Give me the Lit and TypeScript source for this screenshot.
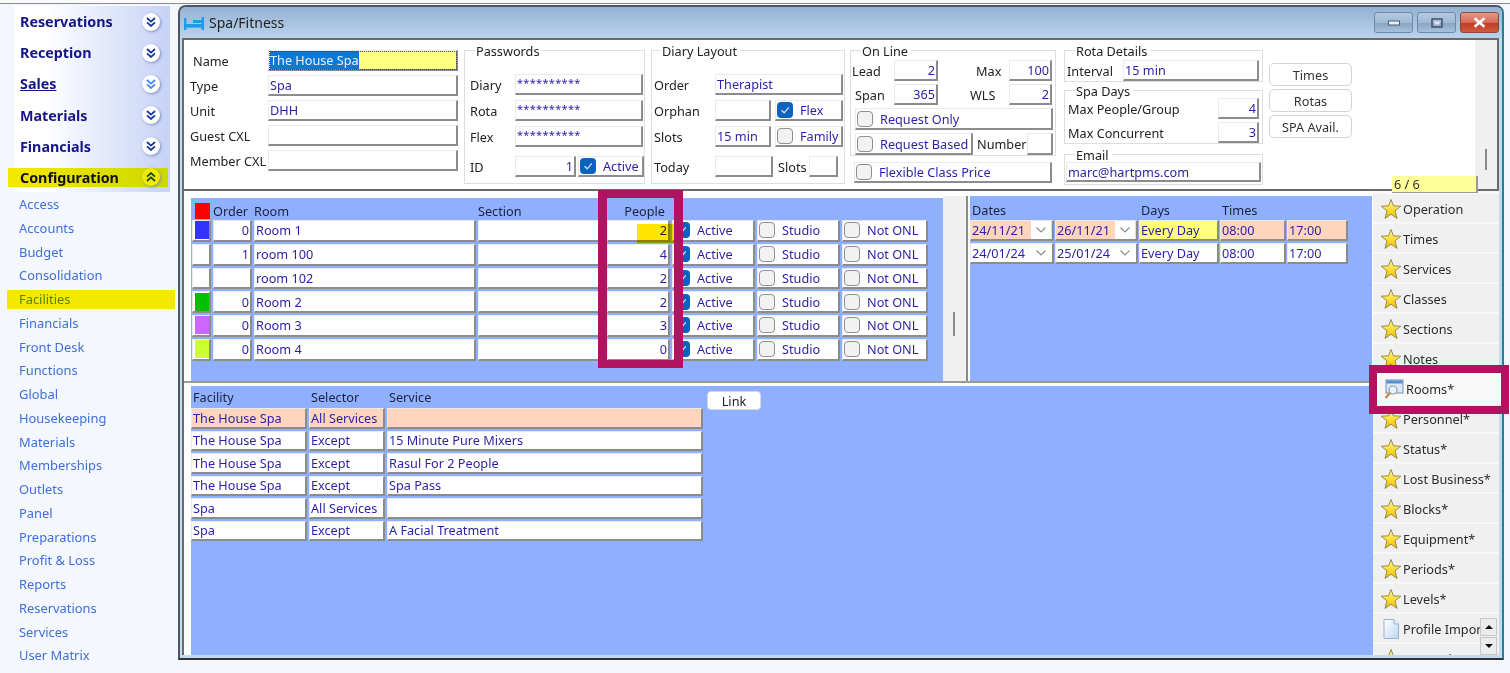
import { LitElement, html, css, svg } from "lit";
import { customElement } from "lit/decorators.js";

const star = html`<svg class="star" viewBox="0 0 22 22" width="22" height="22"><defs><linearGradient id="sg" x1="0" y1="0" x2="0" y2="1"><stop offset="0" stop-color="#fff7a0"/><stop offset="0.6" stop-color="#fbd928"/><stop offset="1" stop-color="#eeb410"/></linearGradient></defs><path d="M11 1.5 L13.4 7.8 L20.8 8.2 L15 12.8 L17 20.4 L11 16.2 L5 20.4 L7 12.8 L1.2 8.2 L8.6 7.8 Z" fill="url(#sg)" stroke="#8f8240" stroke-width="0.9"/></svg>`;
const roomsIcon = html`<svg class="star" viewBox="0 0 22 22" width="22" height="22"><rect x="3" y="2" width="17" height="13" fill="#dbe8f6" stroke="#6d8fb5"/><rect x="3.5" y="2.5" width="16" height="3" fill="#5a8fd0"/><circle cx="10" cy="12" r="4" fill="#e9f3f8" stroke="#8aa0a8" stroke-width="1.2"/><path d="M7 15 L2.5 20" stroke="#c08a50" stroke-width="2.2"/></svg>`;
const docIcon = html`<svg class="star" viewBox="0 0 22 22" width="22" height="22"><defs><linearGradient id="dg" x1="0" y1="0" x2="1" y2="1"><stop offset="0" stop-color="#ffffff"/><stop offset="1" stop-color="#bcd6f4"/></linearGradient></defs><path d="M4 1.5 H14 L18.5 6 V20.5 H4 Z" fill="url(#dg)" stroke="#9db4cc"/><path d="M14 1.5 V6 H18.5" fill="#e8f0fa" stroke="#9db4cc"/></svg>`;

const chev = (up: boolean, color: string) => html`<svg class="chev" viewBox="0 0 10 10" width="10" height="10"><g fill="none" stroke=${color} stroke-width="1.7">${up ? svg`<path d="M1 4.6 L5 1 L9 4.6"/><path d="M1 9 L5 5.4 L9 9"/>` : svg`<path d="M1 1 L5 4.6 L9 1"/><path d="M1 5.4 L5 9 L9 5.4"/>`}</g></svg>`;

const tick = html`<svg viewBox="0 0 16 16" width="16" height="16"><path d="M4.5 8.2 L7.2 10.8 L11.8 5.4" fill="none" stroke="#cfe4fa" stroke-width="1.3"/></svg>`;
const cb = (on: boolean) => html`<span class="cb ${on ? "on" : ""}">${on ? tick : ""}</span>`;
const check = (label: string, on = false) => html`<div class="f chk">${cb(on)}<span>${label}</span></div>`;

const dd = html`<span class="dd"><svg viewBox="0 0 12 8" width="12" height="8"><path d="M1.5 1.5 L6 6 L10.5 1.5" fill="none" stroke="#8a8a8a" stroke-width="1.1"/></svg></span>`;

const rooms = [
  ["#3333ff", "0", "Room 1", "2"],
  ["", "1", "room 100", "4"],
  ["", "", "room 102", "2"],
  ["#00c000", "0", "Room 2", "2"],
  ["#cc66ff", "0", "Room 3", "3"],
  ["#ccff33", "0", "Room 4", "0"],
];
const links = [
  ["The House Spa", "All Services", ""],
  ["The House Spa", "Except", "15 Minute Pure Mixers"],
  ["The House Spa", "Except", "Rasul For 2 People"],
  ["The House Spa", "Except", "Spa Pass"],
  ["Spa", "All Services", ""],
  ["Spa", "Except", "A Facial Treatment"],
];
const heads = ["Reservations", "Reception", "Sales", "Materials", "Financials"];
const items = ["Access", "Accounts", "Budget", "Consolidation", "Facilities", "Financials", "Front Desk", "Functions", "Global", "Housekeeping", "Materials", "Memberships", "Outlets", "Panel", "Preparations", "Profit & Loss", "Reports", "Reservations", "Services", "User Matrix"];
const tabs = ["Operation", "Times", "Services", "Classes", "Sections", "Notes", "Rooms*", "Personnel*", "Status*", "Lost Business*", "Blocks*", "Equipment*", "Periods*", "Levels*", "Profile Impor", "Groups*"];

@customElement("app-root")
export class AppRoot extends LitElement {
  static styles = css`
    :host { display: block; width: 1510px; height: 673px; overflow: hidden; position: relative; background: #f4f7fd;
      font-family: "Noto Sans", "Liberation Sans", sans-serif; font-size: 12.7px; color: #222; }
    .top { height: 4px; box-sizing: border-box; border-bottom: 1px solid #8a8a8a; background: #fafafa; }
    .body { display: flex; height: 669px; }

    .side { width: 178px; flex: none; padding-top: 2px; box-sizing: border-box; }
    .head { height: 31.2px; margin-left: 14px; width: 156px; display: flex; align-items: center; box-sizing: border-box;
      background: linear-gradient(90deg, #ffffff 20%, #c6d2f6 100%); color: #15158a; font-weight: 700; font-size: 14.3px; padding-left: 6px; }
    .head .t { flex: 1; }
    .head.ul .t { text-decoration: underline; }
    .circle { width: 18px; height: 18px; border-radius: 50%; background: #fff; box-shadow: 1px 1px 3px #7f8fc0; display: flex; align-items: center; justify-content: center; margin-right: 10px; }
    .head.cfg { height: 30.4px; }
    .head.cfg .inner { display: flex; align-items: center; flex: 1; height: 19px; margin-left: -12px; padding-left: 12px; margin-right: 2px;
      background: linear-gradient(90deg, #f5e800, #cdd800); color: #111; }
    .head.cfg .circle { background: #f0ea00; margin-right: 8px; }
    .item { height: 23.75px; display: flex; align-items: center; padding-left: 19px; color: #3f6fd8; font-size: 12.9px; box-sizing: border-box; }
    .item.sel { height: 19px; margin: 2.4px 3px 2.4px 7px; padding-left: 12px; background: #f4e800; color: #55850f; }

    .win { width: 1326px; height: 655px; margin-top: 1px; flex: none; box-sizing: border-box; border: 2px solid #4c5560; border-right-color: #2a7f8e; border-bottom-color: #333; border-radius: 8px 8px 0 0;
      background: #c2dbf0; padding: 0 3px 3px 2px; display: flex; flex-direction: column; }
    .title { height: 31px; flex: none; margin: 0 -3px 0 -2px; padding: 0 3px 0 4px; display: flex; background: linear-gradient(180deg, #95b2d2, #b9d3ec); border-radius: 6px 6px 0 0; }
    .title .ico { margin-top: 10px; }
    .title .name { margin: 6px 0 0 5px; font-size: 14px; line-height: 20px; color: #222; flex: 1; }
    .wbtn { width: 39px; height: 21px; margin: 5px 0 0 4px; box-sizing: border-box; border: 1px solid #6d88a8; border-radius: 3px; display: flex; align-items: center; justify-content: center;
      background: linear-gradient(180deg, #b5cae0 0%, #a0b9d4 50%, #86a3c2 51%, #a8c2dc 100%); }
    .wbtn.x { background: linear-gradient(180deg, #e39a8a 0%, #d66b55 50%, #bd3a25 51%, #d05a40 100%); border-color: #8a4a3a; }

    .client { flex: 1; border-top: 2px solid #6a6a6a; border-left: 2px solid #6a6a6a; display: flex; flex-direction: column; min-height: 0; background: #fff; }
    .tp { height: 149px; flex: none; display: flex; align-items: flex-start; background: #fff; position: relative; border-bottom: 2px solid #6a6a6a; border-right: 2px solid #6a6a6a; box-sizing: content-box; }
    .hbar { position: absolute; right: 0; top: 0; bottom: 0; width: 22px; background: #f0f0f0; display: flex; justify-content: center; align-items: flex-end; padding-bottom: 19px; box-sizing: border-box; }
    .hbar i { display: block; width: 2px; height: 21px; background: #8a8a8a; }
    .counter { position: absolute; left: 1208px; top: 136px; width: 86px; height: 17px; box-sizing: border-box; background: #ffff9c; border-right: 2px solid #999; border-bottom: 1px solid #999; line-height: 16px; padding-left: 2px; color: #333; z-index: 2; }

    .f { background: #fff; box-sizing: border-box; border: 1px solid #eaeaea; border-right: 2px solid #8c8c8c; border-bottom: 2px solid #8c8c8c; color: #2a1fa5; display: flex; align-items: center; padding: 0 1px 0 1px; overflow: hidden; white-space: nowrap; height: 100%; }
    .f.r { justify-content: flex-end; }
    .f.y { background: #ffff80; }
    .f.p { background: #ffd6bd; }
    .f.focus { outline: 1px dotted #444; outline-offset: -2px; }
    .sel-t { background: #0a78d6; color: #e8f4ff; }
    .stars { font-size: 11px; letter-spacing: 0.3px; padding-bottom: 3px; }

    .nameform { margin: 10px 0 0 6px; width: 268px; flex: none; }
    .row { display: flex; height: 21px; margin-bottom: 4px; align-items: stretch; flex: none; }
    .row .l { display: flex; align-items: center; flex: none; white-space: nowrap; color: #222; }
    .l.w78 { width: 78px; } .l.w45 { width: 45px; } .l.w61 { width: 61px; } .l.w42 { width: 42px; } .l.w56 { width: 56px; }
    .pl3 { padding-left: 3px; box-sizing: border-box; }
    .w190 { width: 190px; flex: none; } .w128 { width: 128px; flex: none; } .w136 { width: 136px; flex: none; }
    .group { border: 1px solid #dedede; box-sizing: border-box; flex: none; }
    .legend { display: block; width: fit-content; height: 16px; line-height: 16px; margin-top: -8px; margin-left: 5px; padding: 0 3px 0 1px; background: #fff; color: #222; white-space: nowrap; }
    .g5 { margin-bottom: 5px; }
    .pw { width: 181px; height: 134px; margin: 10px 0 0 6px; padding-left: 5px; }
    .pw .legend { margin-bottom: 15px; }
    .dl { width: 194px; height: 134px; margin: 10px 0 0 6px; padding-left: 2px; }
    .dl .legend { margin-bottom: 15px; margin-left: 7px; }
    .row.last { margin-top: 9px; }
    .gap2 { margin-left: 2px; } .gap4 { margin-left: 4px; }
    .olcol { width: 206px; margin: 10px 0 0 5px; flex: none; }
    .ol { height: 106px; padding-left: 1px; }
    .ol .legend { margin-bottom: 1px; margin-left: 9px; }
    .ol .row { margin-bottom: 3px; }
    .ind { margin-left: 3px; height: 22px; }
    .w198 { width: 198px; flex: none; height: 22px; }
    .flexp { width: 198px; height: 21px; margin: 6px 0 0 4px; }
    .chk { gap: 7px; padding-left: 1px; }
    .cb { width: 16px; height: 16px; border-radius: 4px; flex: none; box-sizing: border-box; background: #f2f2f2; border: 1.5px solid #8f8f8f; display: block; }
    .cb.on { background: #0b63bd; border: none; }
    .cb svg { display: block; }
    .rcol { width: 199px; margin: 10px 0 0 8px; flex: none; }
    .rc { height: 32px; padding-left: 2px; margin-bottom: 8px; }
    .rc .legend { margin-bottom: 1px; margin-left: 8px; }
    .rc .row { height: 21px; margin-bottom: 0; }
    .sd { height: 54px; padding-left: 3px; margin-bottom: 10px; }
    .sd .legend { margin-bottom: -1px; margin-left: 7px; }
    .sd .row { margin-bottom: 3px; }
    .sd .f { width: 41px; margin-left: auto; margin-right: 3px; }
    .em { height: 31px; padding-left: 1px; }
    .em .legend { margin-bottom: -1px; margin-left: 9px; }
    .em .f { height: 20px; width: 195px; }
    .btns { margin: 23px 0 0 6px; display: flex; flex-direction: column; gap: 3px; flex: none; width: 83px; }
    .btn { height: 23px; border: 1px solid #d4d4d4; border-radius: 5px; background: #fff; display: flex; align-items: center; justify-content: center; color: #333; box-sizing: border-box; }

    .main { flex: 1; display: flex; min-height: 0; }
    .left { width: 1189px; flex: none; background: #fff; padding-left: 7px; box-sizing: border-box; display: flex; flex-direction: column; }
    .upper { height: 190px; display: flex; flex: none; }
    .roomsp { width: 752px; margin-top: 7px; background: #8fb0fe; flex: none; padding-left: 1px; box-sizing: border-box; }
    .rgrid { display: grid; grid-template-columns: 19px 39px 222px 127px 63px 83px 83px 86px; column-gap: 2px; row-gap: 2px; grid-template-rows: 20px repeat(6, 21.75px); }
    .hd { padding-top: 5px; display: flex; align-items: center; box-sizing: border-box; color: #1c2040; white-space: nowrap; }
    .hd.e { justify-content: flex-end; padding-right: 5px; }
    .sw { width: 15px; height: 18px; display: block; margin-left: 2px; }
    .swc { padding: 0; align-items: center; }
    .rsq { width: 15px; height: 16px; background: #ff0000; margin: 5px 0 0 3px; }
    .split { width: 25px; flex: none; background: #f0f0f0; border-right: 2px solid #8a8a8a; box-sizing: border-box; margin-top: 5px; display: flex; justify-content: center; align-items: flex-end; padding: 0 2px 45px 0; }
    .split i { display: block; width: 2px; height: 24px; background: #8a8a8a; }
    .datesp { width: 402px; margin: 5px 0 0 2px; background: #8fb0fe; flex: none; box-sizing: border-box; }
    .dgrid { display: grid; grid-template-columns: 84px 83px 80px 66px 61px; column-gap: 1px; row-gap: 2px; grid-template-rows: 22px 21px 21px; }
    .dgrid .hd { padding: 5px 0 0 2px; }
    .datec { padding-right: 0; }
    .datec span.tx { flex: 1; }
    .dd { width: 20px; height: 100%; display: flex; align-items: center; justify-content: center; background: #fff; margin-right: 1px; flex: none; }
    .sep { height: 5px; flex: none; background: #fff; border-top: 2px solid #9a9a9a; box-sizing: border-box; margin-left: -7px; }
    .lower { flex: 1; background: #8fb0fe; display: flex; align-items: flex-start; }
    .lgrid { display: grid; grid-template-columns: 116px 76px 316px; column-gap: 2px; row-gap: 2px; grid-template-rows: 20px repeat(6, 20.5px); }
    .lgrid .hd { padding: 2px 0 0 2px; }
    .link { width: 54px; height: 19px; margin: 5px 0 0 4px; background: #fff; border-radius: 4px; border: 1px solid #d8d8d8; display: flex; align-items: center; justify-content: center; color: #222; box-sizing: border-box; }

    .tabs { flex: 1; min-width: 0; padding-top: 3px; background: #f7f9fc; position: relative; overflow: hidden; }
    .tab { height: 30px; box-sizing: border-box; background: #f0f0f0; border-bottom: 2px solid #f8f8f8; display: flex; align-items: center; padding: 2px 0 0 7px; gap: 1px; color: #2b2b2b; white-space: nowrap; }
    .tab svg { flex: none; }
    .sbtns { position: absolute; right: 2px; top: 427px; width: 17px; display: flex; flex-direction: column; gap: 1px; }
    .sb { height: 18px; background: #ececec; border: 1px solid #c8c8c8; box-sizing: border-box; display: flex; align-items: center; justify-content: center; }
    .tri { width: 0; height: 0; border-left: 4px solid transparent; border-right: 4px solid transparent; }
    .tri.u { border-bottom: 4px solid #111; } .tri.d { border-top: 4px solid #111; }

    .mark { position: absolute; box-sizing: border-box; border: 8px solid #b0135f; pointer-events: none; z-index: 3; }
    .mark.a { left: 598px; top: 190px; width: 85px; height: 178px; border-left-width: 9px; border-right-width: 9px; }
    .mark.b { left: 1369px; top: 365px; width: 140px; height: 49px; }
    .hl { position: absolute; left: 637px; top: 224px; width: 39px; height: 19px; background: #ffe600; mix-blend-mode: multiply; z-index: 2; }
    .roomtab { position: absolute; left: 1377px; top: 373px; width: 124px; height: 32px; background: #f8f8f8; z-index: 2; display: flex; align-items: center; gap: 1px; padding-left: 6px; box-sizing: border-box; color: #2b2b2b; }
  `;

  render() {
    return html`
      <div class="top"></div>
      <div class="body">
        <aside class="side">
          ${heads.map((h) => html`<div class="head ${h === "Sales" ? "ul" : ""}"><span class="t">${h}</span><span class="circle">${chev(false, h === "Sales" ? "#3f86ee" : "#12329a")}</span></div>`)}
          <div class="head cfg"><div class="inner"><span class="t">Configuration</span><span class="circle">${chev(true, "#14461a")}</span></div></div>
          ${items.map((i) => html`<div class="item ${i === "Facilities" ? "sel" : ""}">${i}</div>`)}
        </aside>
        <section class="win">
          <div class="title">
            <svg class="ico" viewBox="0 0 20 14" width="20" height="14"><g fill="#1e9be8"><rect x="0" y="1" width="2.4" height="12"/><rect x="17.6" y="0" width="2.4" height="13"/><rect x="0" y="7" width="20" height="3.6"/><rect x="9" y="3" width="9" height="3"/></g></svg>
            <span class="name">Spa/Fitness</span>
            <div class="wbtn"><svg viewBox="0 0 12 6" width="12" height="6"><rect x="0.5" y="1" width="11" height="4" fill="#e8eef5" stroke="#4f5f72"/></svg></div>
            <div class="wbtn"><svg viewBox="0 0 12 10" width="12" height="10"><rect x="1" y="1" width="10" height="8" fill="none" stroke="#3d4a5c" stroke-width="1.4"/><rect x="3.5" y="3.5" width="5" height="3" fill="#dfe8f2"/></svg></div>
            <div class="wbtn x"><svg viewBox="0 0 12 10" width="13" height="11"><path d="M1.5 1 L10.5 9 M10.5 1 L1.5 9" stroke="#fff" stroke-width="2.4"/></svg></div>
          </div>
          <div class="client">
            <div class="tp">
              <div class="nameform">
                <div class="row"><span class="l w78 pl3">Name</span><div class="f y focus w190"><span class="sel-t">The House Spa</span></div></div>
                <div class="row"><span class="l w78">Type</span><div class="f w190">Spa</div></div>
                <div class="row"><span class="l w78">Unit</span><div class="f w190">DHH</div></div>
                <div class="row"><span class="l w78">Guest CXL</span><div class="f w190"></div></div>
                <div class="row"><span class="l w78">Member CXL</span><div class="f w190"></div></div>
              </div>
              <div class="group pw">
                <span class="legend">Passwords</span>
                <div class="row g5"><span class="l w45">Diary</span><div class="f w128"><span class="stars">**********</span></div></div>
                <div class="row g5"><span class="l w45">Rota</span><div class="f w128"><span class="stars">**********</span></div></div>
                <div class="row g5"><span class="l w45">Flex</span><div class="f w128"><span class="stars">**********</span></div></div>
                <div class="row last"><span class="l w45">ID</span><div class="f r" style="width:61px">1</div><div class="gap2" style="width:66px">${check("Active", true)}</div></div>
              </div>
              <div class="group dl">
                <span class="legend">Diary Layout</span>
                <div class="row g5"><span class="l w61">Order</span><div class="f w128">Therapist</div></div>
                <div class="row g5"><span class="l w61">Orphan</span><div class="f" style="width:56px"></div><div class="gap4" style="width:68px">${check("Flex", true)}</div></div>
                <div class="row g5"><span class="l w61">Slots</span><div class="f" style="width:56px">15 min</div><div class="gap4" style="width:68px">${check("Family")}</div></div>
                <div class="row last"><span class="l w61">Today</span><div class="f" style="width:58px"></div><span class="l" style="width:36px;padding-left:5px;box-sizing:border-box">Slots</span><div class="f" style="width:29px"></div></div>
              </div>
              <div class="olcol">
                <div class="group ol">
                  <span class="legend">On Line</span>
                  <div class="row"><span class="l w42">Lead</span><div class="f r" style="width:44px">2</div><span class="l" style="width:71px;padding-left:38px;box-sizing:border-box">Max</span><div class="f r" style="width:43px">100</div></div>
                  <div class="row"><span class="l w42 pl3">Span</span><div class="f r" style="width:44px">365</div><span class="l" style="width:71px;padding-left:32px;box-sizing:border-box">WLS</span><div class="f r" style="width:43px">2</div></div>
                  <div class="row ind"><div class="w198">${check("Request Only")}</div></div>
                  <div class="row ind"><div style="width:118px;height:22px;flex:none">${check("Request Based")}</div><span class="l" style="width:54px;padding-left:4px;box-sizing:border-box">Number</span><div class="f" style="width:26px"></div></div>
                </div>
                <div class="flexp">${check("Flexible Class Price")}</div>
              </div>
              <div class="rcol">
                <div class="group rc">
                  <span class="legend">Rota Details</span>
                  <div class="row"><span class="l w56">Interval</span><div class="f w136">15 min</div></div>
                </div>
                <div class="group sd">
                  <span class="legend">Spa Days</span>
                  <div class="row"><span class="l">Max People/Group</span><div class="f r">4</div></div>
                  <div class="row"><span class="l">Max Concurrent</span><div class="f r">3</div></div>
                </div>
                <div class="group em">
                  <span class="legend">Email</span>
                  <div class="f">marc@hartpms.com</div>
                </div>
              </div>
              <div class="btns"><div class="btn">Times</div><div class="btn">Rotas</div><div class="btn">SPA Avail.</div></div>
              <div class="hbar"><i></i></div>
              <div class="counter">6 / 6</div>
            </div>
            <div class="main">
              <div class="left">
                <div class="upper">
                  <div class="roomsp">
                    <div class="rgrid">
                      <div><div class="rsq"></div></div>
                      <div class="hd">Order</div><div class="hd">Room</div><div class="hd">Section</div><div class="hd e">People</div><div></div><div></div><div></div>
                      ${rooms.map((r) => html`
                        <div class="f swc">${r[0] ? html`<span class="sw" style="background:${r[0]}"></span>` : ""}</div>
                        <div class="f r">${r[1]}</div>
                        <div class="f">${r[2]}</div>
                        <div class="f"></div>
                        <div class="f r">${r[3]}</div>
                        ${check("Active", true)}${check("Studio")}${check("Not ONL")}
                      `)}
                    </div>
                  </div>
                  <div class="split"><i></i></div>
                  <div class="datesp">
                    <div class="dgrid">
                      <div class="hd">Dates</div><div></div><div class="hd">Days</div><div class="hd">Times</div><div></div>
                      <div class="f p datec"><span class="tx">24/11/21</span>${dd}</div>
                      <div class="f p datec"><span class="tx">26/11/21</span>${dd}</div>
                      <div class="f y">Every Day</div><div class="f p">08:00</div><div class="f p">17:00</div>
                      <div class="f datec"><span class="tx">24/01/24</span>${dd}</div>
                      <div class="f datec"><span class="tx">25/01/24</span>${dd}</div>
                      <div class="f">Every Day</div><div class="f">08:00</div><div class="f">17:00</div>
                    </div>
                  </div>
                </div>
                <div class="sep"></div>
                <div class="lower">
                  <div class="lgrid">
                    <div class="hd">Facility</div><div class="hd">Selector</div><div class="hd">Service</div>
                    ${links.map((l, i) => html`
                      <div class="f ${i === 0 ? "p" : ""}">${l[0]}</div>
                      <div class="f ${i === 0 ? "p" : ""}">${l[1]}</div>
                      <div class="f ${i === 0 ? "p" : ""}">${l[2]}</div>
                    `)}
                  </div>
                  <div class="link">Link</div>
                </div>
              </div>
              <div class="tabs">
                ${tabs.map((t) => html`<div class="tab">${t === "Profile Impor" ? docIcon : star}<span>${t}</span></div>`)}
                <div class="sbtns"><div class="sb"><i class="tri u"></i></div><div class="sb"><i class="tri d"></i></div></div>
              </div>
            </div>
          </div>
        </section>
      </div>
      <div class="hl"></div>
      <div class="roomtab">${roomsIcon}<span>Rooms*</span></div>
      <div class="mark a"></div>
      <div class="mark b"></div>
    `;
  }
}
